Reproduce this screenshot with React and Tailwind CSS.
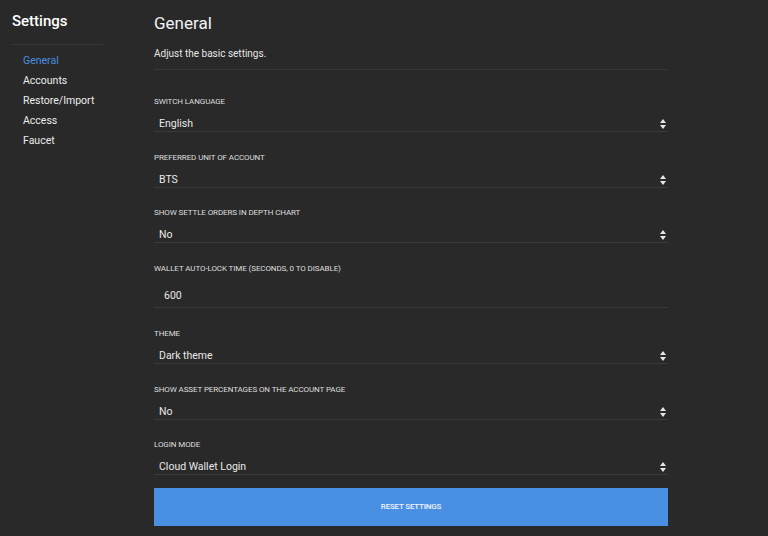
const font = { fontFamily: 'Roboto, "Liberation Sans", sans-serif' };

const nav = ['General', 'Accounts', 'Restore/Import', 'Access', 'Faucet'];

const fields = [
  { label: 'Switch language', value: 'English', gap: 'mt-0' },
  { label: 'Preferred unit of account', value: 'BTS', gap: 'mt-[19px]' },
  { label: 'Show settle orders in depth chart', value: 'No', gap: 'mt-[18px]' },
  { label: 'Wallet auto-lock time (seconds, 0 to disable)', value: '600', input: true, gap: 'mt-[19px]' },
  { label: 'Theme', value: 'Dark theme', gap: 'mt-[19px]' },
  { label: 'Show asset percentages on the account page', value: 'No', gap: 'mt-[19px]' },
  { label: 'Login mode', value: 'Cloud Wallet Login', gap: 'mt-[18px]' },
];

function Arrows() {
  return (
    <svg width="6" height="10" viewBox="0 0 6 10" className="shrink-0">
      <path d="M0 4 L3 0 L6 4 Z" fill="#e6e6e6" />
      <path d="M0 6 L6 6 L3 10 Z" fill="#e6e6e6" />
    </svg>
  );
}

function Field({ label, value, input, gap }) {
  return (
    <div className={'flex flex-col ' + gap}>
      <div className="pt-[1px] text-[8px] leading-[12px] uppercase text-[#dedede] tracking-[-0.1px]">{label}</div>
      {input ? (
        <div className="mt-[5px] h-[28px] pt-[4px] pl-[10px] flex items-center border-b border-[#3a3a3a] text-[10.5px] text-[#e8e8e8]">
          {value}
        </div>
      ) : (
        <div className="mt-[4px] h-[20px] pt-[4px] pl-[5px] pr-[2px] flex items-center justify-between border-b border-[#3a3a3a] text-[10.5px] text-[#e8e8e8]">
          <span>{value}</span>
          <Arrows />
        </div>
      )}
    </div>
  );
}

export default function App() {
  return (
    <div style={font} className="w-[768px] h-[536px] overflow-hidden bg-[#292929] flex text-white">
      {/* Sidebar */}
      <div className="w-[154px] shrink-0 px-[12px]">
        <div className="mt-[11px] text-[15px] leading-[20px] font-medium text-white">Settings</div>
        <div className="mt-[13px] w-[91px] h-px bg-[#383838]" />
        <div className="mt-[6px] pl-[11px] flex flex-col">
          {nav.map((n, i) => (
            <div
              key={n}
              className={
                'text-[10.5px] leading-[20px] ' +
                (i === 0 ? 'text-[#4a8fe0]' : 'text-[#ececec]')
              }
            >
              {n}
            </div>
          ))}
        </div>
      </div>

      {/* Content */}
      <div className="w-[514px] shrink-0">
        <div className="mt-[11px] text-[17px] leading-[24px] text-[#f2f2f2]">General</div>
        <div className="mt-[11px] text-[10px] leading-[16px] text-[#e6e6e6]">Adjust the basic settings.</div>
        <div className="mt-[7px] h-px bg-[#383838]" />
        <div className="mt-[25px] flex flex-col">
          {fields.map((f) => (
            <Field key={f.label} {...f} />
          ))}
        </div>
        <button className="mt-[13px] w-full h-[38px] bg-[#4a90e2] text-[8px] font-medium uppercase text-[#eef4fc] tracking-[-0.2px]">
          Reset settings
        </button>
      </div>
    </div>
  );
}
